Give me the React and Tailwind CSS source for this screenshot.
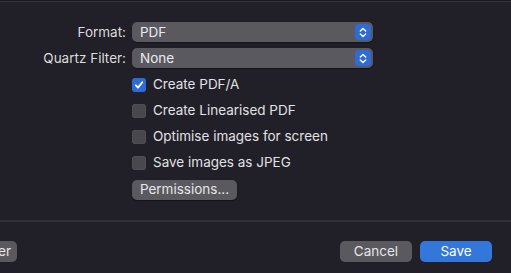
const font = { fontFamily: 'Inter, "Noto Sans", sans-serif' };

function Stepper() {
  return (
    <span className="flex h-[16px] w-[16px] items-center justify-center rounded-[4px] bg-[#2e6bd9]">
      <svg width="8" height="11" viewBox="0 0 8 11" fill="none" stroke="white" strokeWidth="1.4" strokeLinecap="round" strokeLinejoin="round">
        <path d="M1.3 4 L4 1.4 L6.7 4" />
        <path d="M1.3 7 L4 9.6 L6.7 7" />
      </svg>
    </span>
  );
}

function Popup({ label, value }) {
  return (
    <div className="flex items-center">
      <div className="w-[126px] text-right text-[13.5px] text-[#dcdbde]">{label}</div>
      <div className="ml-[6px] flex h-[20px] w-[241px] items-center justify-between rounded-[5px] bg-[#5b5960] pl-[8px] pr-[2px] shadow-[0_0.5px_1px_rgba(0,0,0,0.4)]">
        <span className="text-[13.5px] text-[#ebebed]">{value}</span>
        <Stepper />
      </div>
    </div>
  );
}

function Check({ checked, label }) {
  return (
    <div className="flex h-[26px] items-center">
      {checked ? (
        <span className="flex h-[14px] w-[14px] items-center justify-center rounded-[3px] bg-[#2e6bd9]">
          <svg width="10" height="10" viewBox="0 0 10 10" fill="none" stroke="white" strokeWidth="1.8" strokeLinecap="round" strokeLinejoin="round">
            <path d="M1.8 5.3 L4 7.6 L8.3 2.2" />
          </svg>
        </span>
      ) : (
        <span className="h-[14px] w-[14px] rounded-[3px] bg-[#4a484f] shadow-[inset_0_0_0_0.5px_rgba(255,255,255,0.08)]" />
      )}
      <span className="ml-[7px] text-[13.5px] text-[#e2e1e4]">{label}</span>
    </div>
  );
}

export default function App() {
  return (
    <div style={font} className="flex h-[273px] w-[511px] flex-col overflow-hidden bg-[#211f27]">
      <div className="h-[2px] w-full border-b border-[#35333b] bg-[#1c1a21]" />
      <div className="flex flex-col gap-[6px] pt-[20px]">
        <Popup label="Format:" value="PDF" />
        <Popup label="Quartz Filter:" value="None" />
      </div>
      <div className="ml-[132px] mt-[3px] flex flex-col">
        <Check checked label="Create PDF/A" />
        <Check label="Create Linearised PDF" />
        <Check label="Optimise images for screen" />
        <Check label="Save images as JPEG" />
        <button className="mt-[4px] flex h-[20px] w-[105px] items-center justify-center rounded-[5px] bg-[#5b5960] text-[13.5px] text-[#e6e5e8] shadow-[0_0.5px_1px_rgba(0,0,0,0.4)]">
          Permissions...
        </button>
      </div>
      <div className="mt-[20px] h-[2px] w-full bg-[#302e36]" />
      <div className="flex items-center justify-between pt-[19px]">
        <button className="-ml-[50px] flex h-[21px] w-[67px] items-center justify-end rounded-[5px] bg-[#5b5960] pr-[6px] text-[13.5px] text-[#e6e5e8]">
          Filter
        </button>
        <div className="mr-[19px] flex gap-[8px]">
          <button className="flex h-[21px] w-[72px] items-center justify-center rounded-[5px] bg-[#5b5960] text-[13.5px] text-[#e6e5e8]">
            Cancel
          </button>
          <button className="flex h-[21px] w-[72px] items-center justify-center rounded-[5px] bg-[#3377db] text-[13.5px] text-white">
            Save
          </button>
        </div>
      </div>
    </div>
  );
}
